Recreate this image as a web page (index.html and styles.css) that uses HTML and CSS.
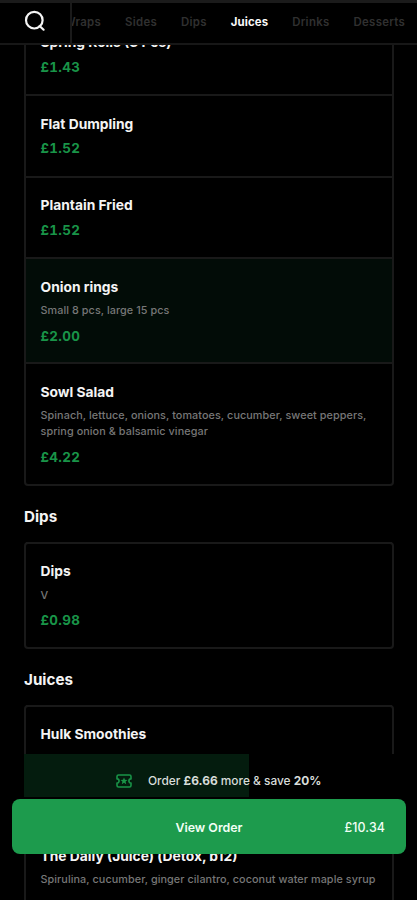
FILE: index.html
```html
<!DOCTYPE html>
<html lang="en">
<head>
<meta charset="utf-8">
<title>Menu</title>
<link rel="stylesheet" href="styles.css">
</head>
<body>
<header class="topbar">
  <button class="search" aria-label="Search">
    <svg width="22" height="22" viewBox="0 0 22 22" fill="none" stroke="currentColor" stroke-width="2.2" stroke-linecap="round"><circle cx="10.3" cy="10.2" r="8.3"/><path d="M15.600 16L19.600 19.700"/></svg>
  </button>
  <nav class="tabs">
    <a class="tab">Wraps</a><a class="tab">Sides</a><a class="tab">Dips</a><a class="tab active">Juices</a><a class="tab">Drinks</a><a class="tab">Desserts</a>
  </nav>
</header>
<main class="menu">
  <section class="card">
    <article class="item"><h3>Spring Rolls (3 Pcs)</h3><div class="price">£1.43</div></article>
    <article class="item"><h3>Flat Dumpling</h3><div class="price">£1.52</div></article>
    <article class="item"><h3>Plantain Fried</h3><div class="price">£1.52</div></article>
    <article class="item described selected"><h3>Onion rings</h3><p>Small 8 pcs, large 15 pcs</p><div class="price">£2.00</div></article>
    <article class="item tall"><h3>Sowl Salad</h3><p>Spinach, lettuce, onions, tomatoes, cucumber, sweet peppers,<br>spring onion &amp; balsamic vinegar</p><div class="price">£4.22</div></article>
  </section>
  <h2>Dips</h2>
  <section class="card">
    <article class="item described"><h3>Dips</h3><p>V</p><div class="price">£0.98</div></article>
  </section>
  <h2>Juices</h2>
  <section class="card">
    <article class="item tall"><h3>Hulk Smoothies</h3></article>
    <article class="item described"><h3>The Daily (Juice) (Detox, b12)</h3><p>Spirulina, cucumber, ginger cilantro, coconut water maple syrup</p><div class="price">£3.48</div></article>
  </section>
</main>
<footer class="orderbar">
  <div class="promo">
    <svg width="16" height="14" viewBox="0 0 16 14" fill="none" stroke="currentColor" stroke-width="1.6" stroke-linejoin="round"><path d="M2.500 1h11A1.500 1.500 0 0 1 15 2.500v2.400a2.100 2.100 0 0 0 0 4.200v2.400A1.500 1.500 0 0 1 13.500 13h-11A1.500 1.500 0 0 1 1 11.500V9.100a2.100 2.100 0 0 0 0-4.200V2.500A1.500 1.500 0 0 1 2.500 1z"/><path fill="currentColor" stroke="none" d="M8 3.500l1 2.300 2.500.2-1.900 1.600.6 2.600L8 8.800 5.800 10.200l.6-2.600L4.500 6l2.500-.2z"/></svg>
    <span>Order <b>£6.66</b> more &amp; save <b>20%</b></span>
  </div>
  <button class="view"><span class="label">View Order</span><span class="total">£10.34</span></button>
</footer>
</body>
</html>
```
FILE: styles.css
```css
* { box-sizing: border-box; }
body {
  margin: 0;
  height: 900px;
  overflow: hidden;
  position: relative;
  background: #000;
  color: #f4f4f4;
  font-family: Inter, "Liberation Sans", sans-serif;
}
button { border: 0; margin: 0; padding: 0; font: inherit; color: inherit; background: none; }
.topbar {
  position: absolute;
  inset: 0 0 auto;
  z-index: 2;
  display: flex;
  height: 45px;
  background: #000;
  border-top: 3px solid #1b1b1b;
  border-bottom: 2px solid #171717;
}
.search {
  flex: 0 0 72px;
  padding: 0 0 4px 24px;
  display: flex;
  align-items: center;
  border-right: 2px solid #1a1a1a;
}
.tabs {
  flex: 1;
  display: flex;
  gap: 24px;
  overflow: hidden;
  white-space: nowrap;
  font-size: 11.400px;
  font-weight: 600;
  line-height: 39px;
  letter-spacing: 0.3px;
  color: #303030;
}
.tab:first-child { margin-left: -8px; }
.tab.active { color: #fafafa; font-weight: 700; letter-spacing: 0.1px; }
.menu { padding: 12.500px 23px 0 24px; }
.card { border: 2px solid #191919; border-radius: 4px; }
.item { height: 81.500px; padding: 15.500px 0 0 14.500px; border-top: 2px solid #191919; white-space: nowrap; }
.item.described { height: 105px; }
.item.tall { height: 121.500px; }
.card .item:first-child { margin-top: -2px; }
.selected { background: #020c07; }
h3 { margin: 0; font-size: 13.800px; line-height: 24px; font-weight: 700; }
p { margin: 4.500px 0 6.500px; font-size: 10.800px; line-height: 16px; font-weight: 500; letter-spacing: .08px; color: #777; }
.price { margin-top: 2.500px; font-size: 13.400px; line-height: 20px; font-weight: 700; letter-spacing: .3px; font-variant-numeric: tabular-nums; color: #199448; }
h2 { margin: 19px 0 13px; font-size: 15.200px; line-height: 24px; font-weight: 700; }
.orderbar { position: absolute; inset: 754px 11px auto 12px; z-index: 2; }
.promo {
  height: 45px;
  margin: 0 12px;
  padding: 8px 0 0 92px;
  display: flex;
  align-items: center;
  gap: 16px;
  background: #000 linear-gradient(#041c0e, #041c0e) 0 0 / 225px 43px no-repeat;
  color: #199448;
  font-size: 11.900px;
  white-space: nowrap;
}
.promo span { color: #d8ddda; font-weight: 500; }
.promo b { font-weight: 700; }
.view {
  width: 100%;
  height: 55px;
  border-radius: 8px;
  padding: 1px 21px 0;
  display: grid;
  grid-template-columns: 1fr auto 1fr;
  align-items: center;
  background: #1d9b4d;
  color: #f2fff6;
  font-size: 12.400px;
  font-weight: 600;
}
.label { grid-column: 2; }
.total { justify-self: end; font-weight: 500; letter-spacing: .1px; }
```
